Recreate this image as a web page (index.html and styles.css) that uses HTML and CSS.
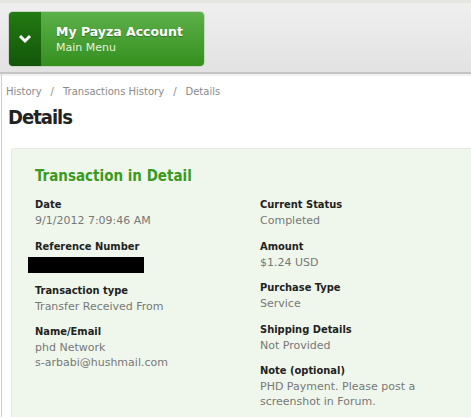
FILE: index.html
```html
<!DOCTYPE html>
<html lang="en">
<head>
    <meta charset="UTF-8">
    <meta name="viewport" content="width=device-width, initial-scale=1.0">
    <title>Payza - Details</title>
    <link rel="stylesheet" href="styles.css">
</head>
<body>
    <div class="topbar">
        <div class="menu-btn">
            <div class="menu-toggle">
                <svg width="14" height="10" viewBox="0 0 14 10">
                    <path d="M2 2 L7 7 L12 2" fill="none" stroke="#fff" stroke-width="3"/>
                </svg>
            </div>
            <div class="menu-text">
                <div class="menu-title">My Payza Account</div>
                <div class="menu-sub">Main Menu</div>
            </div>
        </div>
    </div>

    <div class="page">
        <div class="breadcrumb">
            <span>History</span><span class="sep">/</span><span>Transactions History</span><span class="sep">/</span><span>Details</span>
        </div>
        <h1>Details</h1>

        <div class="panel">
            <h2>Transaction in Detail</h2>
            <div class="columns">
                <div class="col">
                    <div class="field">
                        <div class="label">Date</div>
                        <div class="value">9/1/2012 7:09:46 AM</div>
                    </div>
                    <div class="field">
                        <div class="label">Reference Number</div>
                        <div class="redacted"></div>
                    </div>
                    <div class="field">
                        <div class="label">Transaction type</div>
                        <div class="value">Transfer Received From</div>
                    </div>
                    <div class="field">
                        <div class="label">Name/Email</div>
                        <div class="value">phd Network<br>s-arbabi@hushmail.com</div>
                    </div>
                </div>
                <div class="col">
                    <div class="field">
                        <div class="label">Current Status</div>
                        <div class="value">Completed</div>
                    </div>
                    <div class="field">
                        <div class="label">Amount</div>
                        <div class="value">$1.24 USD</div>
                    </div>
                    <div class="field">
                        <div class="label">Purchase Type</div>
                        <div class="value">Service</div>
                    </div>
                    <div class="field">
                        <div class="label">Shipping Details</div>
                        <div class="value">Not Provided</div>
                    </div>
                    <div class="field">
                        <div class="label">Note (optional)</div>
                        <div class="value">PHD Payment. Please post a<br>screenshot in Forum.</div>
                    </div>
                </div>
            </div>
        </div>
    </div>
</body>
</html>
```

FILE: styles.css
```css
body {
    margin: 0;
    font-family: "DejaVu Sans", Verdana, sans-serif;
    background: #fff;
    overflow: hidden;
}
.topbar {
    height: 74px;
    padding: 9px 0 0 9px;
    box-sizing: border-box;
    background: linear-gradient(#efefef, #e2e2e2);
    border-top: 3px solid #e6e6e0;
    border-bottom: 2px solid #c4c4c4;
    box-shadow: 0 2px 0 #f2f2f2;
}
.menu-btn {
    display: flex;
    width: 195px;
    height: 54px;
    border-radius: 4px;
    overflow: hidden;
    background: linear-gradient(#5cb049, #35901f);
    box-shadow: 0 0 0 1px #c9d6c3;
}
.menu-toggle {
    width: 32px;
    background: linear-gradient(#237a12, #13560a);
    display: flex;
    align-items: center;
    justify-content: center;
}
.menu-text {
    padding: 12px 0 0 15px;
    color: #fff;
}
.menu-title {
    font-size: 12.5px;
    line-height: 15px;
    font-weight: bold;
    text-shadow: 0 1px 1px rgba(0,0,0,0.3);
}
.menu-sub {
    font-size: 11px;
    line-height: 14px;
    margin-top: 2px;
    color: #e4f2df;
}
.page {
    margin-left: 1px;
    border-left: 1px solid #cfcfcf;
    padding: 12px 0 0 4px;
}
.breadcrumb {
    font-size: 10px;
    line-height: 12px;
    color: #8a8a8a;
}
.breadcrumb .sep {
    margin: 0 9px;
}
h1 {
    margin: 7px 0 0 2px;
    font-family: "DejaVu Sans Condensed", "DejaVu Sans", sans-serif;
    font-size: 20px;
    line-height: 24px;
    letter-spacing: -1px;
    color: #222;
}
.panel {
    margin: 19px 0 0 5px;
    background: #eff7ec;
    border-top: 1px solid #e3ecdf;
    border-left: 1px solid #e3ecdf;
    border-top-left-radius: 4px;
    padding: 18px 0 0 23px;
    height: 250px;
}
h2 {
    margin: 0;
    font-family: "DejaVu Sans Condensed", "DejaVu Sans", sans-serif;
    font-size: 15px;
    line-height: 18px;
    color: #3a9a1e;
}
.columns {
    display: grid;
    grid-template-columns: 225px 1fr;
    margin-top: 11px;
}
.field {
    margin-bottom: 9px;
}
.label {
    font-family: "DejaVu Sans Condensed", "DejaVu Sans", sans-serif;
    font-weight: bold;
    font-size: 11px;
    color: #222;
    line-height: 17px;
}
.value {
    font-size: 11px;
    color: #777;
    line-height: 14.5px;
    margin-top: 1px;
}
.redacted {
    width: 116px;
    height: 16px;
    background: #000;
    margin: 2px 0 0 -7px;
}
```
